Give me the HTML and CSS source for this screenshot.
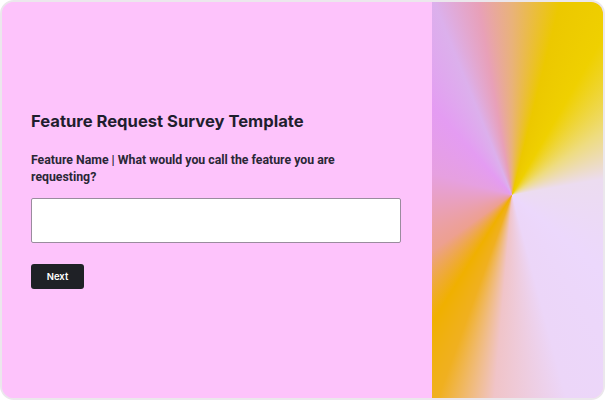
FILE: index.html
```html
<!DOCTYPE html>
<html lang="en">
<head>
<meta charset="utf-8">
<title>Feature Request Survey Template</title>
<link rel="stylesheet" href="styles.css">
</head>
<body>
<div class="card">
  <section class="form-pane">
    <h1 class="title">Feature Request Survey Template</h1>
    <label class="question" for="feature-name">Feature Name | What would you call the feature you are requesting?</label>
    <input class="answer" id="feature-name" type="text">
    <button class="next" type="button">Next</button>
  </section>
  <div class="art-pane"></div>
</div>
</body>
</html>
```

FILE: styles.css
```css
* { box-sizing: border-box; }
html, body { margin: 0; padding: 0; }
body {
  width: 605px;
  height: 400px;
  background: #ffffff;
  font-family: "Inter", "Liberation Sans", sans-serif;
  color: #1f1e2e;
}
.card {
  width: 605px;
  height: 400px;
  border: 2px solid #ebe7ec;
  border-radius: 14px;
  overflow: hidden;
  display: grid;
  grid-template-columns: 430px 1fr;
  background: #fdc3fb;
}
.form-pane {
  background: #fdc3fb;
  padding: 108px 29px 0 29px;
  display: flex;
  flex-direction: column;
  align-items: flex-start;
}
.title {
  margin: 0;
  font-size: 16.6px;
  line-height: 22px;
  font-weight: 700;
  color: #1f1e2e;
}
.question {
  margin-top: 20px;
  width: 340px;
  font-family: "Roboto", "Liberation Sans", sans-serif;
  font-size: 12.3px;
  line-height: 17px;
  font-weight: 700;
  color: #2a2736;
}
.answer {
  margin-top: 12px;
  width: 370px;
  height: 45px;
  border: 1px solid #9a8c9e;
  border-radius: 2px;
  background: #ffffff;
  outline: none;
}
.next {
  margin-top: 21px;
  width: 53px;
  height: 25px;
  border: 0;
  border-radius: 3px;
  background: #1f2126;
  color: #ffffff;
  font-family: inherit;
  font-size: 9.5px;
  font-weight: 600;
  padding: 0;
}
.art-pane {
  background: conic-gradient(from 0deg at 80px 193px,
    #e9b27a 0deg, #ecc800 14deg, #efd000 30deg, #eedc80 55deg,
    #ecdcf0 80deg, #ecd8fc 130deg, #ecd6f8 165deg, #f0c4c8 185deg,
    #f0b020 200deg, #f0b000 212deg, #eda090 235deg, #e6a0e0 285deg,
    #e49cf2 318deg, #dcb0ec 338deg, #e8a0b8 350deg, #e9b27a 360deg);
}
```
